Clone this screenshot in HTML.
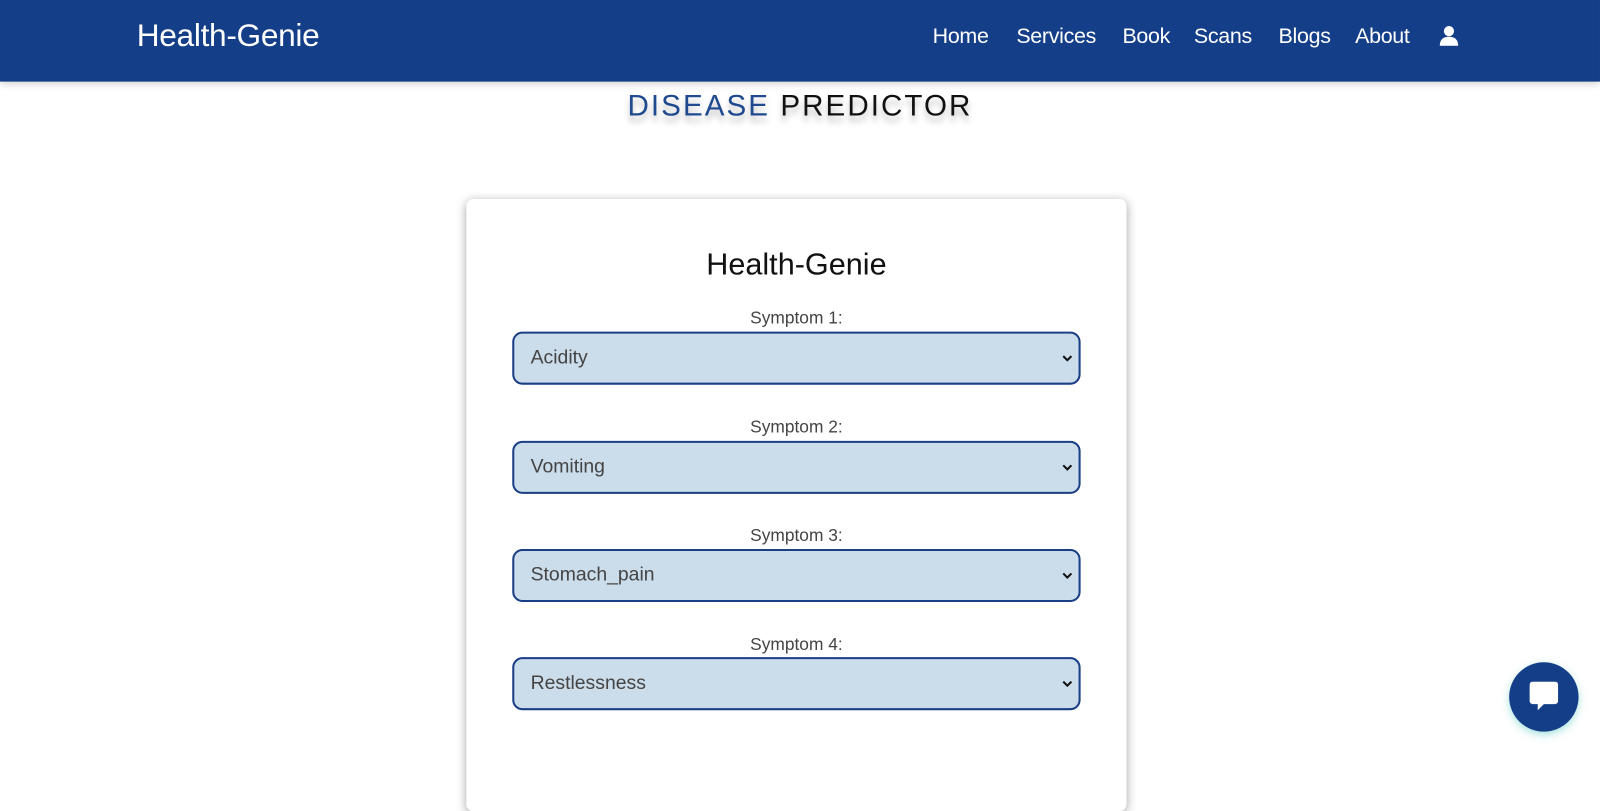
<!DOCTYPE html>
<html><head><style>
body{margin:0;width:1600px;height:747px;overflow:hidden;background:#fff;font-family:"Liberation Sans",sans-serif;}
.wrap{position:absolute;left:0;top:0;width:1568px;height:732px;transform:scale(1.0204);transform-origin:0 0}
.nav{position:absolute;left:0;top:0;width:1568px;height:80px;background:#143f88;box-shadow:0 2px 8px rgba(0,0,0,.2);}
.logo{position:absolute;left:134px;top:17px;color:#fff;font-size:31px;letter-spacing:-0.3px}
.links{position:absolute;top:24px;color:#fff;font-size:21px;}
.links span{position:absolute;white-space:nowrap;letter-spacing:-0.3px}
h1{position:absolute;top:88px;left:0;width:1568px;text-align:center;margin:0;font-weight:normal;font-size:29px;letter-spacing:2px;text-shadow:0 6px 6px rgba(0,0,0,.25)}
.card{position:absolute;left:457px;top:195px;width:647px;height:600px;background:#fff;border-radius:7px;box-shadow:0 2px 10px rgba(0,0,0,.35)}
.card h2{position:absolute;top:48px;width:100%;text-align:center;margin:0;font-weight:normal;font-size:30px;color:#111}
.lbl{position:absolute;left:0;width:100%;text-align:center;font-size:17px;color:#444}
.sel{position:absolute;left:45px;width:553px;height:48px;background:#cbdcea;border:2px solid #1a3f85;border-radius:10px;font-size:19px;color:#444;line-height:48px;box-sizing:content-box}
.sel span{position:absolute;left:16px}
.sel svg{position:absolute;right:6px;top:20px}
.chat{position:absolute;left:1479px;top:649px;width:68px;height:68px;border-radius:50%;background:#143f88;box-shadow:0 3px 8px rgba(80,200,190,.5)}
</style></head><body><div class="wrap">
<div class="nav"><div class="logo">Health-Genie</div>
<div class="links"><span style="left:914px">Home</span><span style="left:996px">Services</span><span style="left:1100px">Book</span><span style="left:1170px">Scans</span><span style="left:1253px">Blogs</span><span style="left:1328px">About</span></div>
<svg style="position:absolute;left:1410px;top:25px" width="20" height="20" viewBox="0 0 20 20"><circle cx="10" cy="5.5" r="5" fill="#fff"/><path d="M1 20 Q1 11 10 11 Q19 11 19 20Z" fill="#fff"/></svg>
</div>
<h1><span style="color:#1f4a8f">DISEASE</span> <span style="color:#111">PREDICTOR</span></h1>
<div class="card"><h2>Health-Genie</h2>
<div class="lbl" style="top:107px">Symptom 1:</div><div class="sel" style="top:130px"><span>Acidity</span><svg width="10" height="8" viewBox="0 0 10 8"><path d="M1 2l4 4 4-4" stroke="#111" stroke-width="2" fill="none"/></svg></div>
<div class="lbl" style="top:214px">Symptom 2:</div><div class="sel" style="top:237px"><span>Vomiting</span><svg width="10" height="8" viewBox="0 0 10 8"><path d="M1 2l4 4 4-4" stroke="#111" stroke-width="2" fill="none"/></svg></div>
<div class="lbl" style="top:320px">Symptom 3:</div><div class="sel" style="top:343px"><span>Stomach_pain</span><svg width="10" height="8" viewBox="0 0 10 8"><path d="M1 2l4 4 4-4" stroke="#111" stroke-width="2" fill="none"/></svg></div>
<div class="lbl" style="top:427px">Symptom 4:</div><div class="sel" style="top:449px"><span>Restlessness</span><svg width="10" height="8" viewBox="0 0 10 8"><path d="M1 2l4 4 4-4" stroke="#111" stroke-width="2" fill="none"/></svg></div>
</div>
<div class="chat"><svg style="position:absolute;left:20px;top:19px" width="28" height="30" viewBox="0 0 28 30"><path d="M3 0h22a3 3 0 0 1 3 3v16a3 3 0 0 1-3 3H14l-6 6v-6H3a3 3 0 0 1-3-3V3a3 3 0 0 1 3-3z" fill="#fff"/></svg></div>
</div></body></html>
